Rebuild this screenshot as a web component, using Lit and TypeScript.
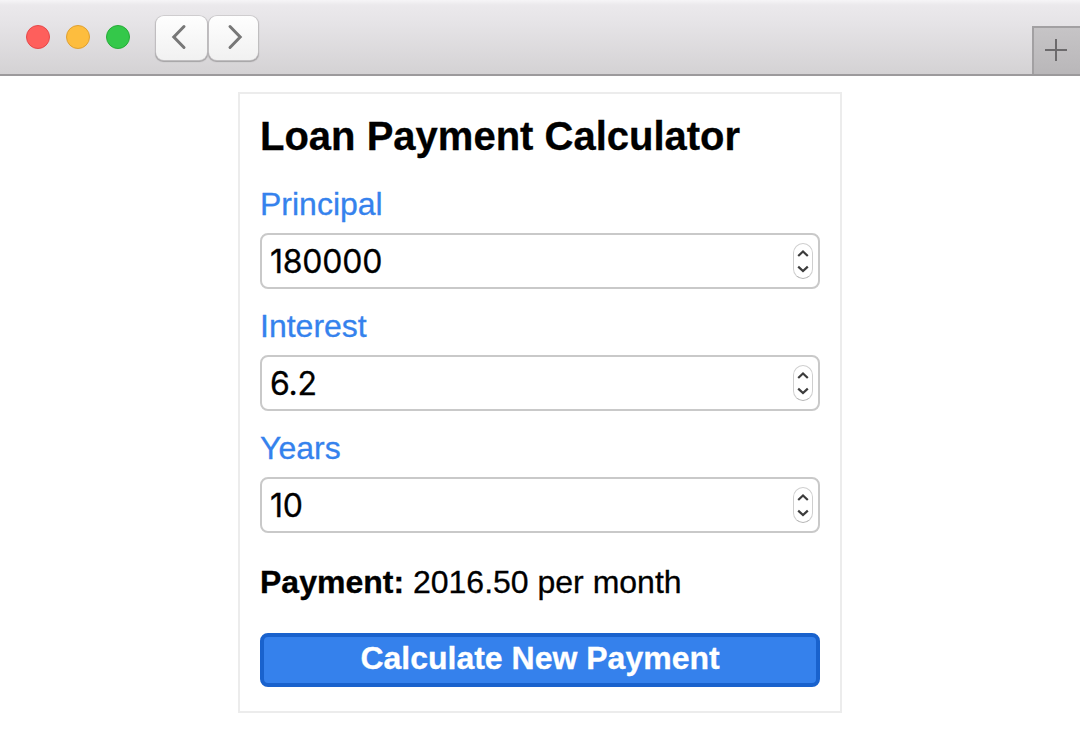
import { LitElement, html, css, svg } from "lit";
import { customElement, property, state } from "lit/decorators.js";

@customElement("window-bar")
class WindowBar extends LitElement {
  static styles = css`
    :host {
      display: flex;
      box-sizing: border-box;
      height: 76px;
      padding-left: 26px;
      border-bottom: 2px solid #9c9a9c;
      background: linear-gradient(#f6f5f7 0, #ebe9ec 5px, #e6e4e7 22px, #d4d2d4 74px);
    }
    .lights {
      display: flex;
      gap: 16px;
      padding-top: 25px;
    }
    .light {
      box-sizing: border-box;
      width: 24px;
      height: 24px;
      border-radius: 50%;
      border: 1px solid;
    }
    .close { background: #fe5f5c; border-color: #e5484a; }
    .minimise { background: #fdbd3e; border-color: #dfa032; }
    .zoom { background: #34c84a; border-color: #27ab38; }
    .nav {
      display: flex;
      gap: 2px;
      padding: 16px 0 0 26px;
    }
    .nav-button {
      display: flex;
      width: 51px;
      height: 44px;
      border-radius: 8px;
      background: linear-gradient(#fefefe, #f1f1f1);
      box-shadow: 0 0 0 0.7px #c9c7c9, 0 1px 1px 0.3px #a5a3a5;
    }
    .next { width: 49px; }
    .tab-add {
      box-sizing: border-box;
      width: 48px;
      height: 48px;
      margin: 26px 0 0 auto;
      border: solid #a2a0a2;
      border-width: 2px 0 0 2px;
      background: linear-gradient(#c6c4c6, #b9b7b9);
    }
    svg { display: block; }
  `;

  render() {
    return html`
      <div class="lights">
        <span class="light close"></span>
        <span class="light minimise"></span>
        <span class="light zoom"></span>
      </div>
      <div class="nav">
        <span class="nav-button">
          <svg width="51" height="44" fill="none" stroke="#777" stroke-width="3" stroke-linecap="round" stroke-linejoin="miter">
            <path d="M28 10.5 17.8 21 28 31.5" />
          </svg>
        </span>
        <span class="nav-button next">
          <svg width="49" height="44" fill="none" stroke="#777" stroke-width="3" stroke-linecap="round" stroke-linejoin="miter">
            <path d="M21 10.5 31.2 21 21 31.5" />
          </svg>
        </span>
      </div>
      <div class="tab-add">
        <svg width="46" height="46" fill="none" stroke="#6c6a6c" stroke-width="2">
          <path d="M11 22H33M22 11V33" />
        </svg>
      </div>
    `;
  }
}

@customElement("number-field")
class NumberField extends LitElement {
  @property() label = "";
  @property() value = "";

  static styles = css`
    :host { display: block; }
    .label {
      display: block;
      margin-bottom: 11px;
      font-size: 32px;
      line-height: 36px;
      color: #3582ed;
      -webkit-text-stroke: 0.3px currentColor;
    }
    .box {
      display: flex;
      align-items: center;
      justify-content: space-between;
      box-sizing: border-box;
      height: 56px;
      padding: 0 5px 0 8px;
      border: 2px solid #c9c9c9;
      border-radius: 8px;
      background: #fff;
    }
    .value {
      padding-top: 2px;
      font-family: Inter, "Liberation Sans", sans-serif;
      font-size: 32px;
      line-height: 50px;
      letter-spacing: -0.25px;
      -webkit-text-stroke: 0.3px currentColor;
    }
    .stepper {
      box-sizing: border-box;
      width: 20px;
      height: 36px;
      border: 1px solid #cfcfcf;
      border-bottom-color: #b5b5b5;
      border-radius: 10px;
    }
    svg { display: block; }
  `;

  render() {
    return html`
      <span class="label">${this.label}</span>
      <div class="box">
        <span class="value">${this.value}</span>
        <span class="stepper">
          <svg width="18" height="34" fill="none" stroke="#3c3c3c" stroke-width="2.2">
            ${svg`<path d="M4.2 12 9 7.5 13.8 12M4.2 22.6 9 27.1 13.8 22.6" />`}
          </svg>
        </span>
      </div>
    `;
  }
}

@customElement("app-root")
class AppRoot extends LitElement {
  @state() private fields = [
    { label: "Principal", value: "180000" },
    { label: "Interest", value: "6.2" },
    { label: "Years", value: "10" },
  ];
  @state() private payment = "2016.50";

  static styles = css`
    :host {
      display: flex;
      flex-direction: column;
      height: 750px;
      overflow: hidden;
      background: #fff;
      color: #000;
      font-family: "Liberation Sans", Helvetica, Arial, sans-serif;
    }
    .card {
      box-sizing: border-box;
      width: 604px;
      height: 621px;
      margin: 16px auto 0;
      padding: 19px 20px 24px;
      border: 2px solid #ececec;
    }
    .title {
      margin: 0 0 27px;
      font-size: 40px;
      font-weight: 700;
      line-height: 46px;
      white-space: nowrap;
      -webkit-text-stroke: 0.3px currentColor;
    }
    .fields {
      display: flex;
      flex-direction: column;
      gap: 19px;
    }
    .payment {
      margin: 31px 0 33px;
      font-size: 32px;
      line-height: 36px;
      white-space: nowrap;
      -webkit-text-stroke: 0.3px currentColor;
    }
    .submit {
      display: block;
      box-sizing: border-box;
      width: 100%;
      height: 54px;
      padding: 0 0 4px;
      border: 4px solid #1962cd;
      border-radius: 8px;
      background: #3581ec;
      color: #fff;
      font: 700 32px/42px "Liberation Sans", Helvetica, Arial, sans-serif;
      -webkit-text-stroke: 0.3px currentColor;
    }
  `;

  render() {
    return html`
      <window-bar></window-bar>
      <main class="card">
        <h1 class="title">Loan Payment Calculator</h1>
        <div class="fields">
          ${this.fields.map(
            (f) => html`<number-field .label=${f.label} .value=${f.value}></number-field>`
          )}
        </div>
        <p class="payment"><strong>Payment:</strong> ${this.payment} per month</p>
        <button class="submit">Calculate New Payment</button>
      </main>
    `;
  }
}
